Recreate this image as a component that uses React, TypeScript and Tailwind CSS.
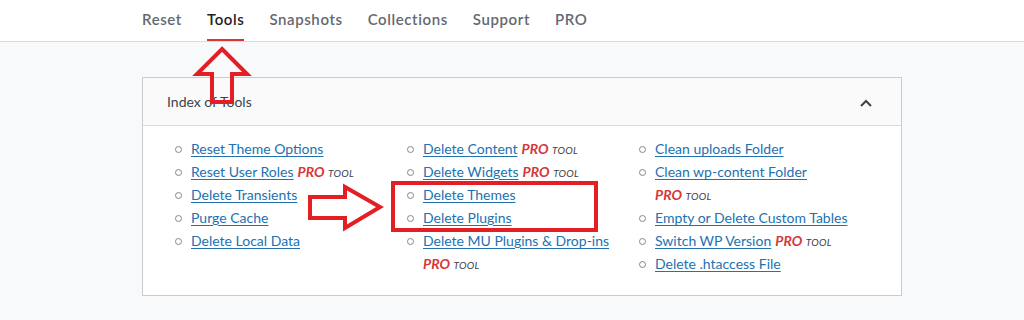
import React from 'react';

type Tool = { label: string; pro?: boolean; wrap?: boolean };

const columns: Tool[][] = [
  [
    { label: 'Reset Theme Options' },
    { label: 'Reset User Roles', pro: true },
    { label: 'Delete Transients' },
    { label: 'Purge Cache' },
    { label: 'Delete Local Data' },
  ],
  [
    { label: 'Delete Content', pro: true },
    { label: 'Delete Widgets', pro: true },
    { label: 'Delete Themes' },
    { label: 'Delete Plugins' },
    { label: 'Delete MU Plugins & Drop-ins', pro: true, wrap: true },
  ],
  [
    { label: 'Clean uploads Folder' },
    { label: 'Clean wp-content Folder', pro: true, wrap: true },
    { label: 'Empty or Delete Custom Tables' },
    { label: 'Switch WP Version', pro: true },
    { label: 'Delete .htaccess File' },
  ],
];

const tabs = ['Reset', 'Tools', 'Snapshots', 'Collections', 'Support', 'PRO'];

function ProTag({ block }: { block?: boolean }) {
  return (
    <span className={block ? 'block h-[23px]' : 'ml-1 leading-none'}>
      <span className="font-bold italic leading-none text-[#d63638]">PRO</span>{' '}
      <span className="italic text-[10px] leading-none tracking-wide text-[#3c434a]">TOOL</span>
    </span>
  );
}

export default function App() {
  return (
    <div className="relative min-h-[320px] bg-[#f8f9fb] font-['Lato','Open_Sans',sans-serif] text-[14px] text-[#1d2327]">
      {/* tabs */}
      <nav className="h-[42px] bg-white border-b border-[#dcdcde] flex items-stretch gap-[25px] pl-[142px]">
        {tabs.map((t) => (
          <div
            key={t}
            className={`flex items-center font-semibold tracking-[0.6px] text-[15px] border-b-2 ${
              t === 'Tools' ? 'border-[#d63638] text-[#1d2327]' : 'border-transparent text-[#646970]'
            }`}
          >
            {t}
          </div>
        ))}
      </nav>

      {/* card */}
      <div className="ml-[142px] mt-[35px] w-[760px] border border-[#c9cbcf] bg-white">
        <div className="h-[48px] bg-[#fafafa] border-b border-[#dcdcde] flex items-center justify-between pl-[24px] pr-[28px]">
          <span className="text-[14px] text-[#3c434a]">Index of Tools</span>
          <svg width="14" height="10" viewBox="0 0 14 10" className="mt-[2px]">
            <path d="M2 8 L7 3 L12 8" fill="none" stroke="#3c434a" strokeWidth="2" />
          </svg>
        </div>
        <div className="flex pl-[32px] pt-[11px] pb-[20px]">
          {columns.map((col, i) => (
            <ul key={i} className={i === 2 ? 'w-[260px]' : 'w-[232px]'}>
              {col.map((tool) => (
                <li key={tool.label} className="flex leading-[23px]">
                  <span className="w-[16px] shrink-0 flex items-start pt-[9px]">
                    <span className="w-[7px] h-[7px] rounded-full border-[1.5px] border-[#82868c]" />
                  </span>
                  <span>
                    <span className="block h-[23px]">
                      <a className="text-[#2271b1] underline underline-offset-2" href="#">
                        {tool.label}
                      </a>
                      {tool.pro && !tool.wrap && <ProTag />}
                    </span>
                    {tool.pro && tool.wrap && <ProTag block />}
                  </span>
                </li>
              ))}
            </ul>
          ))}
        </div>
      </div>

      {/* annotations */}
      <svg className="absolute inset-0 pointer-events-none" width="1024" height="320">
        <polygon
          points="222,49 247,74 232,74 232,102 212,102 212,74 197,74"
          fill="none"
          stroke="#e31e24"
          strokeWidth="4"
          strokeLinejoin="miter"
        />
        <polygon
          points="310,197 345,197 345,187 380,207 345,228 345,218 310,218"
          fill="none"
          stroke="#e31e24"
          strokeWidth="4"
        />
        <rect x="393" y="183" width="203" height="47" fill="none" stroke="#e31e24" strokeWidth="4" />
      </svg>
    </div>
  );
}
